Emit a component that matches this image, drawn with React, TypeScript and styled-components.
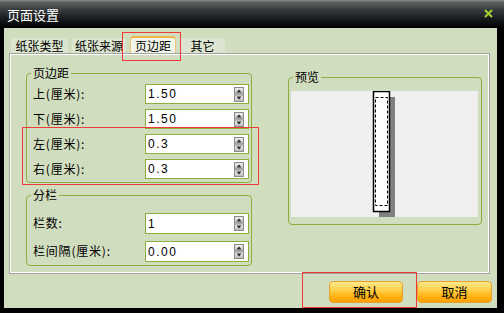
import React from 'react'
import styled, { createGlobalStyle } from 'styled-components';

const GlobalStyle = createGlobalStyle`
  html, body {
    margin: 0;
    padding: 0;
    background: #000;
  }
  body {
    font-family: "Noto Sans CJK SC", "Liberation Sans", sans-serif;
  }
`;

interface FieldRow {
  label: string;
  value: string;
}

const marginRows: FieldRow[] = [
  { label: '上(厘米):', value: '1.50' },
  { label: '下(厘米):', value: '1.50' },
  { label: '左(厘米):', value: '0.3' },
  { label: '右(厘米):', value: '0.3' },
];

const columnRows: FieldRow[] = [
  { label: '栏数:', value: '1' },
  { label: '栏间隔(厘米):', value: '0.00' },
];

const tabs = [
  { name: '纸张类型', width: 57 },
  { name: '纸张来源', width: 54 },
  { name: '页边距', width: 46 },
  { name: '其它', width: 45 },
];

const SpinIcon: React.FC = () => (
  <svg width="10" height="15" viewBox="0 0 10 15">
    <defs>
      <linearGradient id="spin" x1="0" y1="0" x2="0" y2="1">
        <stop offset="0" stopColor="#f4f4f4" />
        <stop offset="1" stopColor="#b8b8b8" />
      </linearGradient>
    </defs>
    <rect x="0.5" y="0.5" width="9" height="6.5" fill="url(#spin)" stroke="#8a8a8a" />
    <rect x="0.5" y="8" width="9" height="6.5" fill="url(#spin)" stroke="#8a8a8a" />
    <path d="M2.5 5.5 L5 2.5 L7.5 5.5 Z" fill="#2a2a2a" />
    <path d="M2.5 9.5 L5 12.5 L7.5 9.5 Z" fill="#2a2a2a" />
  </svg>
);

const PreviewDrawing: React.FC = () => (
  <svg width="187" height="126" viewBox="0 0 187 126">
    <rect x="88" y="6" width="16" height="120" fill="#808080" />
    <rect x="82.5" y="0.5" width="16" height="120" fill="#fff" stroke="#000" strokeWidth="1.5" />
    <rect x="84.5" y="6.5" width="12" height="108" fill="none" stroke="#000" strokeDasharray="3 2" />
  </svg>
);

const App: React.FC = () => {
  return (
    <>
      <GlobalStyle />
      <Window>
        <TitleBar>
          <Title>页面设置</Title>
          <CloseButton>
            <svg width="9" height="9" viewBox="0 0 9 9">
              <path d="M1 1 L8 8 M8 1 L1 8" stroke="#a4d034" strokeWidth="2" />
            </svg>
          </CloseButton>
        </TitleBar>
        <Body>
          <TabRow>
            {tabs.map((tab) => (
              <Tab key={tab.name} $width={tab.width} $active={tab.name === '页边距'}>
                {tab.name}
              </Tab>
            ))}
          </TabRow>
          <Panel>
            <LeftColumn>
              <Group $padTop={10} $gap={5}>
                <Legend>页边距</Legend>
                {marginRows.map((row) => (
                  <Row key={row.label} $height={20}>
                    <RowLabel>{row.label}</RowLabel>
                    <SpinInput>
                      <Value>{row.value}</Value>
                      <SpinIcon />
                    </SpinInput>
                  </Row>
                ))}
              </Group>
              <Group $padTop={17} $gap={7}>
                <Legend>分栏</Legend>
                {columnRows.map((row) => (
                  <Row key={row.label} $height={21}>
                    <RowLabel>{row.label}</RowLabel>
                    <SpinInput>
                      <Value>{row.value}</Value>
                      <SpinIcon />
                    </SpinInput>
                  </Row>
                ))}
              </Group>
            </LeftColumn>
            <PreviewGroup>
              <Legend>预览</Legend>
              <PreviewArea>
                <PreviewDrawing />
              </PreviewArea>
            </PreviewGroup>
          </Panel>
          <Footer>
            <OrangeButton $width={74}>确认</OrangeButton>
            <OrangeButton $width={75}>取消</OrangeButton>
          </Footer>
        </Body>
        <Highlight $x={122} $y={32} $w={59} $h={29} />
        <Highlight $x={22} $y={127} $w={237} $h={58} />
        <Highlight $x={302} $y={272} $w={115} $h={36} />
      </Window>
    </>
  );
};

export default App

const Window = styled.div`
  position: relative;
  width: 504px;
  height: 313px;
  background: #000;
  display: flex;
  flex-direction: column;
  overflow: hidden;
`;

const TitleBar = styled.div`
  height: 28px;
  flex-shrink: 0;
  display: flex;
  align-items: center;
  justify-content: space-between;
  padding: 0 11px 0 7px;
  box-sizing: border-box;
  background: linear-gradient(#8c8c8c 0, #606262 2px, #3a3e40 9px, #15181a 20px, #000 28px);
`;

const Title = styled.div`
  color: #fff;
  font-size: 13px;
  line-height: 16px;
  margin-top: 1px;
`;

const CloseButton = styled.div`
  width: 9px;
  height: 9px;
  display: flex;
  margin-top: -1px;
`;

const Body = styled.div`
  flex: 1;
  margin: 0 7px 5px 4px;
  padding: 10px 5px 5px 5px;
  background: #d1ddbf;
  display: flex;
  flex-direction: column;
`;

const TabRow = styled.div`
  height: 15px;
  display: flex;
  align-items: flex-end;
  gap: 4px;
  margin-left: 2px;
`;

const Tab = styled.div<{ $width: number; $active?: boolean }>`
  width: ${(p) => p.$width}px;
  height: ${(p) => (p.$active ? 17 : 15)}px;
  box-sizing: border-box;
  display: flex;
  align-items: center;
  justify-content: center;
  font-size: 12px;
  color: #000;
  border-radius: 4px 4px 0 0;
  background: ${(p) => (p.$active ? '#f1f4e8' : '#dce5cf')};
  border-top: ${(p) => (p.$active ? '2px solid #f2b449' : 'none')};
  border-left: ${(p) => (p.$active ? '1px solid #f2c47a' : 'none')};
  border-right: ${(p) => (p.$active ? '1px solid #f2c47a' : 'none')};
`;

const Panel = styled.div`
  height: 221px;
  margin-right: 2px;
  box-sizing: border-box;
  border: 1px solid #a2a2a2;
  box-shadow: inset 1px 1px 0 #fff, inset -1px -1px 0 #fff;
  padding: 19px 0 0 16px;
  display: flex;
  gap: 36px;
  align-items: flex-start;
`;

const LeftColumn = styled.div`
  width: 226px;
  display: flex;
  flex-direction: column;
  gap: 12px;
`;

const Group = styled.div<{ $padTop: number; $gap: number }>`
  position: relative;
  border: 1px solid #8cae3c;
  border-radius: 4px;
  padding: ${(p) => p.$padTop}px 2px 3px 6px;
  display: flex;
  flex-direction: column;
  gap: ${(p) => p.$gap}px;
`;

const Legend = styled.div`
  position: absolute;
  top: -9px;
  left: 4px;
  padding: 0 2px;
  background: #d1ddbf;
  font-size: 12px;
  line-height: 16px;
  color: #000;
`;

const Row = styled.div<{ $height: number }>`
  height: ${(p) => p.$height}px;
  display: flex;
  align-items: center;
  justify-content: space-between;
`;

const RowLabel = styled.div`
  font-size: 12px;
  letter-spacing: 0.8px;
  color: #000;
  margin-top: -2px;
`;

const SpinInput = styled.div`
  width: 104px;
  height: 100%;
  box-sizing: border-box;
  border: 1px solid #8cae3c;
  background: #fff;
  display: flex;
  align-items: center;
  padding: 0 4px 0 2px;
`;

const Value = styled.div`
  flex: 1;
  font-family: "Liberation Sans", sans-serif;
  font-size: 12px;
  letter-spacing: 1.5px;
  color: #000;
`;

const PreviewGroup = styled.div`
  position: relative;
  width: 194px;
  margin-top: 4px;
  box-sizing: border-box;
  border: 1px solid #8cae3c;
  border-radius: 4px;
  padding: 13px 3px 7px 2px;
`;

const PreviewArea = styled.div`
  height: 126px;
  background: #efefef;
  display: flex;
`;

const Footer = styled.div`
  margin-top: 7px;
  display: flex;
  justify-content: flex-end;
  gap: 14px;
`;

const OrangeButton = styled.button<{ $width: number }>`
  width: ${(p) => p.$width}px;
  height: 22px;
  padding: 0;
  border: 1px solid #eaa02c;
  border-radius: 4px;
  background: linear-gradient(#ffe98c 0, #ffd04a 40%, #ffb010 75%, #ff9f00 100%);
  font-family: "Noto Sans CJK SC", sans-serif;
  font-size: 13px;
  color: #000;
  line-height: 20px;
  cursor: pointer;
`;

const Highlight = styled.div<{ $x: number; $y: number; $w: number; $h: number }>`
  position: absolute;
  left: ${(p) => p.$x}px;
  top: ${(p) => p.$y}px;
  width: ${(p) => p.$w}px;
  height: ${(p) => p.$h}px;
  box-sizing: border-box;
  border: 1px solid #f03a3a;
  pointer-events: none;
`;
